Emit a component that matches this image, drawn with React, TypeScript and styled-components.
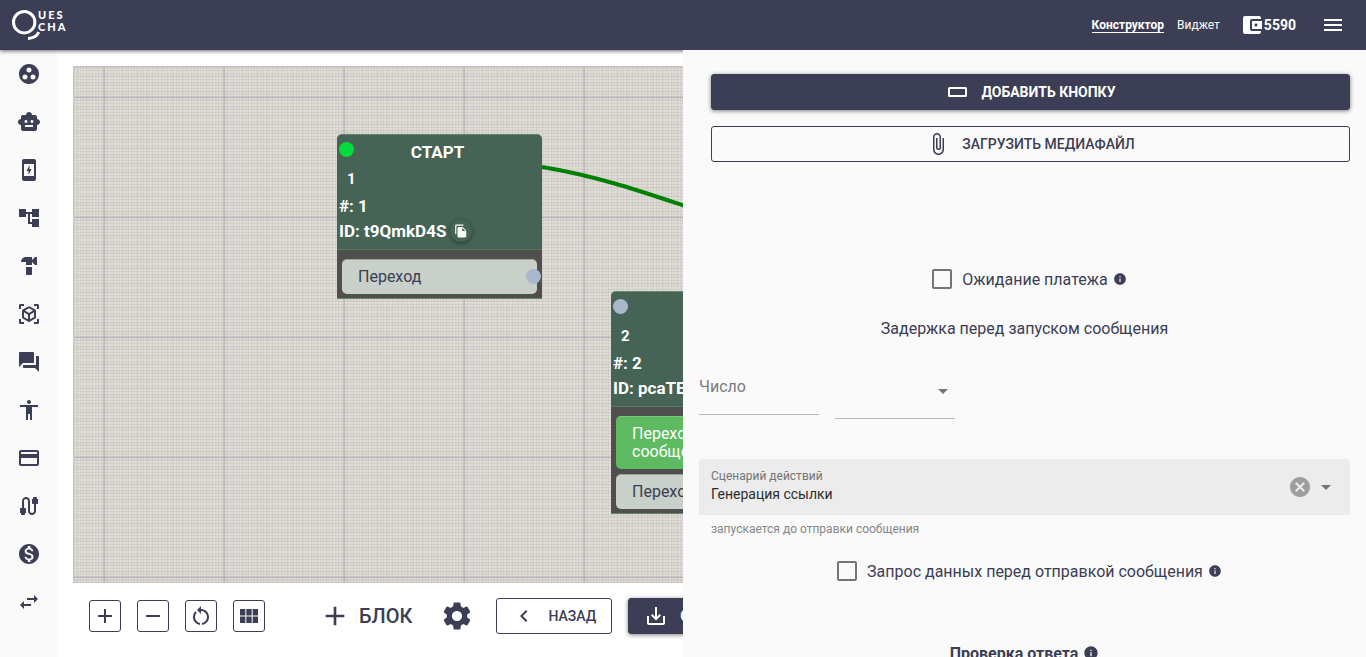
import React from 'react';
import styled, { createGlobalStyle } from 'styled-components';
import {
  MdGroupWork, MdSmartToy, MdChargingStation, MdAccountTree, MdHardware, MdViewInAr,
  MdQuestionAnswer, MdAccessibility, MdPayment, MdCable, MdMonetizationOn, MdSwapHoriz,
  MdAdd, MdRemove, MdRestartAlt, MdViewModule, MdSettings, MdChevronLeft, MdSaveAlt,
  MdAccountBalanceWallet, MdMenu, MdAttachFile, MdInfo, MdCancel,
  MdArrowDropDown, MdFileCopy,
} from 'react-icons/md';

const navy = '#3b3e54';

const GlobalStyle = createGlobalStyle`
  *, *::before, *::after { box-sizing: border-box; }
  body { margin: 0; font-family: Roboto, "Liberation Sans", sans-serif; font-size: 16px; color: ${navy}; background: #fff; }
  button, input, select { font: inherit; color: inherit; }
  button { cursor: pointer; }
  svg { display: block; flex: none; }
`;

const Page = styled.div`
  display: flex;
  flex-direction: column;
  height: 100vh;
`;

const Header = styled.header`
  display: flex;
  align-items: center;
  justify-content: space-between;
  flex: none;
  z-index: 1;
  height: 50px;
  padding: 0 21px 0 12px;
  background: ${navy};
  color: #fff;
  box-shadow: 0 1px 4px rgba(0, 0, 0, 0.6);
`;

const LogoLink = styled.a`
  color: #fff;
`;

const Nav = styled.nav`
  display: flex;
  align-items: center;
`;

const NavLink = styled.a<{ $active?: boolean }>`
  margin-right: 13px;
  padding-top: 1px;
  font-size: 12px;
  line-height: 14px;
  font-weight: ${p => (p.$active ? 700 : 400)};
  color: #fff;
  text-decoration: none;
  border-bottom: 1px solid ${p => (p.$active ? '#fff' : 'transparent')};
`;

const Balance = styled.span`
  display: flex;
  align-items: center;
  margin: 0 25px 0 7px;
  font-size: 14px;
  font-weight: 700;
`;

const PlainButton = styled.button`
  display: flex;
  align-items: center;
  padding: 0;
  border: 0;
  background: none;
`;

const Body = styled.div`
  display: flex;
  flex: 1;
  min-height: 0;
`;

const Sidebar = styled.nav`
  display: flex;
  flex-direction: column;
  align-items: center;
  gap: 24px;
  flex: none;
  width: 57px;
  padding-top: 12px;
  background: #fafafa;
`;

const SideLink = styled.a`
  display: block;
  color: ${navy};
`;

const Work = styled.main`
  display: flex;
  flex-direction: column;
  flex: 1;
  min-width: 0;
  padding: 16px 0 0 16px;
  overflow: hidden;
`;

const Canvas = styled.div`
  position: relative;
  flex: 1;
  border: 1px solid #c6c6c6;
  border-right: 0;
  overflow: hidden;
  background-color: #dedad5;
  background-image:
    linear-gradient(90deg, transparent 29px, rgba(120, 115, 132, 0.14) 29px, rgba(120, 115, 132, 0.24) 30px, rgba(120, 115, 132, 0.24) 31px, rgba(120, 115, 132, 0.1) 31px, transparent 32px),
    linear-gradient(180deg, transparent 29px, rgba(120, 112, 140, 0.14) 29px, rgba(120, 112, 140, 0.24) 30px, rgba(120, 112, 140, 0.24) 31px, rgba(120, 112, 140, 0.08) 31px, transparent 32px),
    repeating-linear-gradient(90deg, rgba(110, 105, 100, 0.08) 0 1px, transparent 1px 3px),
    repeating-linear-gradient(180deg, rgba(110, 105, 100, 0.1) 0 1px, transparent 1px 3px),
    repeating-linear-gradient(180deg, rgba(120, 105, 90, 0.05) 0 2px, transparent 2px 8px),
    repeating-linear-gradient(90deg, rgba(255, 255, 255, 0.12) 0 2px, transparent 2px 5px);
  background-size: 120px 120px;
`;

const Wires = styled.svg`
  position: absolute;
  top: 0;
  left: 0;
  width: 100%;
  height: 100%;
`;

const Node = styled.section`
  position: absolute;
  width: 205px;
  border-radius: 5px 5px 0 0;
  background: #4f4f4f;
  color: #fff;
  border-top: 1px solid #648a6a;
  border-bottom: 1px solid #648a6a;
`;

const NodeHead = styled.div`
  position: relative;
  padding: 8px 2px 6px;
  border-radius: 5px 5px 0 0;
  border-bottom: 1px solid #567a5c;
  background: #456456;
  font-weight: 700;
`;

const NodeTitle = styled.h2`
  height: 19px;
  margin: 0;
  padding-right: 4px;
  font-size: 17px;
  line-height: 19px;
  text-align: center;
`;

const NodeOrder = styled.div`
  padding: 7px 8px 4px;
  font-size: 15px;
  line-height: 20px;
`;

const NodeLine = styled.div`
  display: flex;
  align-items: center;
  gap: 4px;
  height: 25px;
  font-size: 17px;
  line-height: 22px;
  white-space: nowrap;
`;

const CopyButton = styled.button`
  display: flex;
  align-items: center;
  justify-content: center;
  width: 22px;
  height: 22px;
  padding: 0;
  border: 0;
  border-radius: 50%;
  background: #456456;
  color: #fff;
  box-shadow: 0 1px 4px rgba(0, 0, 0, 0.45);
`;

const Port = styled.span<{ $color: string; $side: 'in' | 'out' }>`
  position: absolute;
  ${p => (p.$side === 'in' ? 'left: 2px; top: 7px;' : 'right: -4px; top: 9px;')}
  width: 15px;
  height: 15px;
  border-radius: 50%;
  background: ${p => p.$color};
`;

const Transitions = styled.div`
  display: flex;
  flex-direction: column;
  gap: 5px;
  padding: 9px 5px 4px;
`;

const Transition = styled.div<{ $done?: boolean }>`
  position: relative;
  padding: 8px 16px;
  border-radius: 5px;
  border-top: 1px solid ${p => (p.$done ? '#74c97a' : '#9aa39c')};
  background: ${p => (p.$done ? '#5dba61' : '#c8d0c9')};
  color: ${p => (p.$done ? '#fff' : navy)};
  font-size: 16px;
  line-height: 18px;
  white-space: nowrap;
`;

const Toolbar = styled.div`
  display: flex;
  align-items: center;
  flex: none;
  gap: 16px;
  padding: 15px 0 23px 16px;
`;

const SquareButton = styled.button`
  display: flex;
  align-items: center;
  justify-content: center;
  flex: none;
  width: 32px;
  height: 32px;
  padding: 0;
  border: 1px solid ${navy};
  border-radius: 3px;
  background: #fff;
`;

const AddBlock = styled(PlainButton)`
  gap: 8px;
  flex: none;
  margin: 0 12px 0 38px;
  font-size: 20px;
  line-height: 24px;
  font-weight: 500;
`;

const SettingsButton = styled(PlainButton)`
  flex: none;
  margin-right: 6px;
`;

const ActionButton = styled.button<{ $filled?: boolean }>`
  display: flex;
  align-items: center;
  justify-content: center;
  flex: none;
  gap: 12px;
  height: 36px;
  padding: 0 15px 1px;
  border: 1px solid ${navy};
  border-radius: 3px;
  background: ${p => (p.$filled ? navy : 'transparent')};
  color: ${p => (p.$filled ? '#fff' : navy)};
  font-size: 14px;
  font-weight: ${p => (p.$filled ? 700 : 500)};
  box-shadow: ${p => (p.$filled ? '0 1px 4px rgba(0, 0, 0, 0.5)' : 'none')};
`;

const Panel = styled.aside`
  display: flex;
  flex-direction: column;
  flex: none;
  width: 50%;
  padding: 24px 16px 0;
  overflow-y: auto;
  scrollbar-width: none;
  z-index: 1;
  background: #fafafa;
`;

const PanelActions = styled.div`
  display: flex;
  flex-direction: column;
  gap: 16px;
  margin: 0 0 105px 12px;
`;

const CheckRow = styled.div`
  display: flex;
  align-items: center;
  justify-content: center;
  gap: 5px;
  flex: none;
  height: 24px;
  padding-left: 10px;
`;

const CheckLabel = styled.label`
  display: flex;
  align-items: center;
  gap: 10px;
`;

const CheckInput = styled.input`
  appearance: none;
  width: 20px;
  height: 20px;
  margin: 0;
  border: 2px solid #757575;
  border-radius: 2px;
  &:checked { background: ${navy}; }
`;

const PanelText = styled.p`
  margin: 26px 0 38px;
  line-height: 24px;
  text-align: center;
`;

const Fields = styled.div`
  display: flex;
  align-items: flex-start;
  gap: 16px;
  margin-bottom: 40px;
`;

const LineInput = styled.input`
  width: 120px;
  height: 36px;
  padding: 0 0 20px;
  border: 0;
  border-bottom: 1px solid #b8b8b8;
  border-radius: 0;
  background: none;
  &::placeholder { color: #7c7c7c; opacity: 1; }
`;

const LineSelect = styled.div`
  display: grid;
  align-items: center;
  justify-items: end;
  width: 120px;
  height: 40px;
  padding-bottom: 15px;
  border-bottom: 1px solid #b8b8b8;
  color: #757575;
  > * { grid-area: 1 / 1; }
  > svg { pointer-events: none; }
`;

const BareSelect = styled.select`
  appearance: none;
  width: 100%;
  padding: 0;
  border: 0;
  background: none;
`;

const Filled = styled.div`
  display: flex;
  align-items: center;
  gap: 2px;
  flex: none;
  height: 56px;
  padding: 0 12px;
  border-radius: 4px 4px 0 0;
  background: #ececec;
  color: #757575;
`;

const FilledText = styled.div`
  display: flex;
  flex-direction: column;
  gap: 1px;
  flex: 1;
  padding-bottom: 3px;
  label { font-size: 12px; line-height: 16px; }
  select { font-size: 14px; line-height: 18px; color: #2b2b2b; }
`;

const Hint = styled.p`
  margin: 6px 12px 22px;
  font-size: 12px;
  line-height: 16px;
  color: #868686;
`;

const PanelHeading = styled.h3`
  display: flex;
  align-items: center;
  justify-content: center;
  gap: 5px;
  flex: none;
  height: 24px;
  margin: 58px 0 24px;
  font-size: 16px;
  font-weight: 700;
`;

const Logo = () => (
  <svg width="56" height="32" viewBox="0 0 56 32" fill="none" role="img" aria-label="Quescha">
    <circle cx="12.2" cy="13.2" r="10.7" stroke="#fff" strokeWidth="3" />
    <path d="M16 29.4C21 29.4 24.8 27.4 26.8 23.2" stroke="#fff" strokeWidth="3" />
    <g fill="#fff" fontFamily="Lato, sans-serif" fontWeight="900" fontSize="11" letterSpacing="2">
      <text x="26" y="10">UES</text>
      <text x="26" y="22">CHA</text>
    </g>
  </svg>
);

const ButtonShape = () => (
  <svg width="24" height="24" viewBox="0 0 24 24" fill="none">
    <rect x="3" y="8" width="17" height="8" rx="0.5" stroke="currentColor" strokeWidth="2" />
  </svg>
);

const sideItems = [
  { label: 'Группы', Icon: MdGroupWork },
  { label: 'Боты', Icon: MdSmartToy },
  { label: 'Мобильные', Icon: MdChargingStation },
  { label: 'Сценарии', Icon: MdAccountTree },
  { label: 'Инструменты', Icon: MdHardware },
  { label: 'Объекты', Icon: MdViewInAr },
  { label: 'Диалоги', Icon: MdQuestionAnswer },
  { label: 'Пользователи', Icon: MdAccessibility },
  { label: 'Платежи', Icon: MdPayment },
  { label: 'Интеграции', Icon: MdCable },
  { label: 'Тарифы', Icon: MdMonetizationOn },
  { label: 'Обмен', Icon: MdSwapHoriz },
];

const zoomItems = [
  { label: 'Увеличить', Icon: MdAdd },
  { label: 'Уменьшить', Icon: MdRemove },
  { label: 'Сбросить', Icon: MdRestartAlt },
  { label: 'Сетка', Icon: MdViewModule },
];

type BlockProps = {
  title?: string;
  number: number;
  id: string;
  portColor: string;
  x: number;
  y: number;
  children: React.ReactNode;
};

const Block = ({ title, number, id, portColor, x, y, children }: BlockProps) => (
  <Node style={{ left: x, top: y }}>
    <NodeHead>
      <Port $side="in" $color={portColor} />
      <NodeTitle>{title}</NodeTitle>
      <NodeOrder>{number}</NodeOrder>
      <NodeLine>#: {number}</NodeLine>
      <NodeLine>
        ID: {id}
        <CopyButton aria-label="Копировать ID"><MdFileCopy size={14} /></CopyButton>
      </NodeLine>
    </NodeHead>
    <Transitions>{children}</Transitions>
  </Node>
);

export default function App() {
  return (
    <Page>
      <GlobalStyle />
      <Header>
        <LogoLink href="#"><Logo /></LogoLink>
        <Nav>
          <NavLink href="#constructor" $active>Конструктор</NavLink>
          <NavLink href="#widget">Виджет</NavLink>
          <Balance><MdAccountBalanceWallet size={24} />5590</Balance>
          <PlainButton aria-label="Меню"><MdMenu size={24} color="#fff" /></PlainButton>
        </Nav>
      </Header>
      <Body>
        <Sidebar>
          {sideItems.map(({ label, Icon }) => (
            <SideLink key={label} href="#" aria-label={label}><Icon size={24} /></SideLink>
          ))}
        </Sidebar>
        <Work>
          <Canvas>
            <Wires>
              <path d="M468 100C523 109 566 124 611 139S700 171 740 181" fill="none" stroke="#008000" strokeWidth="4" />
            </Wires>
            <Block title="СТАРТ" number={1} id="t9QmkD4S" portColor="#00dc3c" x={263} y={67}>
              <Transition>Переход<Port $side="out" $color="#a9b9cb" /></Transition>
            </Block>
            <Block number={2} id="pcaTEw7K" portColor="#a9b9cb" x={537} y={224}>
              <Transition $done>Переход к<br />сообщению</Transition>
              <Transition>Переход<Port $side="out" $color="#a9b9cb" /></Transition>
            </Block>
          </Canvas>
          <Toolbar>
            {zoomItems.map(({ label, Icon }) => (
              <SquareButton key={label} aria-label={label}><Icon size={24} /></SquareButton>
            ))}
            <AddBlock><MdAdd size={32} />БЛОК</AddBlock>
            <SettingsButton aria-label="Настройки"><MdSettings size={34} /></SettingsButton>
            <ActionButton><MdChevronLeft size={24} />НАЗАД</ActionButton>
            <ActionButton $filled><MdSaveAlt size={24} />СОХРАНИТЬ</ActionButton>
          </Toolbar>
        </Work>
        <Panel>
          <PanelActions>
            <ActionButton $filled><ButtonShape />ДОБАВИТЬ КНОПКУ</ActionButton>
            <ActionButton><MdAttachFile size={24} />ЗАГРУЗИТЬ МЕДИАФАЙЛ</ActionButton>
          </PanelActions>
          <CheckRow>
            <CheckLabel><CheckInput type="checkbox" />Ожидание платежа</CheckLabel>
            <MdInfo size={14} />
          </CheckRow>
          <PanelText>Задержка перед запуском сообщения</PanelText>
          <Fields>
            <LineInput aria-label="Число" placeholder="Число" />
            <LineSelect>
              <BareSelect aria-label="Единица времени" defaultValue=""><option value="" /></BareSelect>
              <MdArrowDropDown size={24} />
            </LineSelect>
          </Fields>
          <Filled>
            <FilledText>
              <label htmlFor="scenario">Сценарий действий</label>
              <BareSelect id="scenario"><option>Генерация ссылки</option></BareSelect>
            </FilledText>
            <PlainButton aria-label="Очистить"><MdCancel size={24} color="#9e9e9e" /></PlainButton>
            <MdArrowDropDown size={24} />
          </Filled>
          <Hint>запускается до отправки сообщения</Hint>
          <CheckRow>
            <CheckLabel><CheckInput type="checkbox" />Запрос данных перед отправкой сообщения</CheckLabel>
            <MdInfo size={14} />
          </CheckRow>
          <PanelHeading>Проверка ответа <MdInfo size={16} /></PanelHeading>
        </Panel>
      </Body>
    </Page>
  );
}
